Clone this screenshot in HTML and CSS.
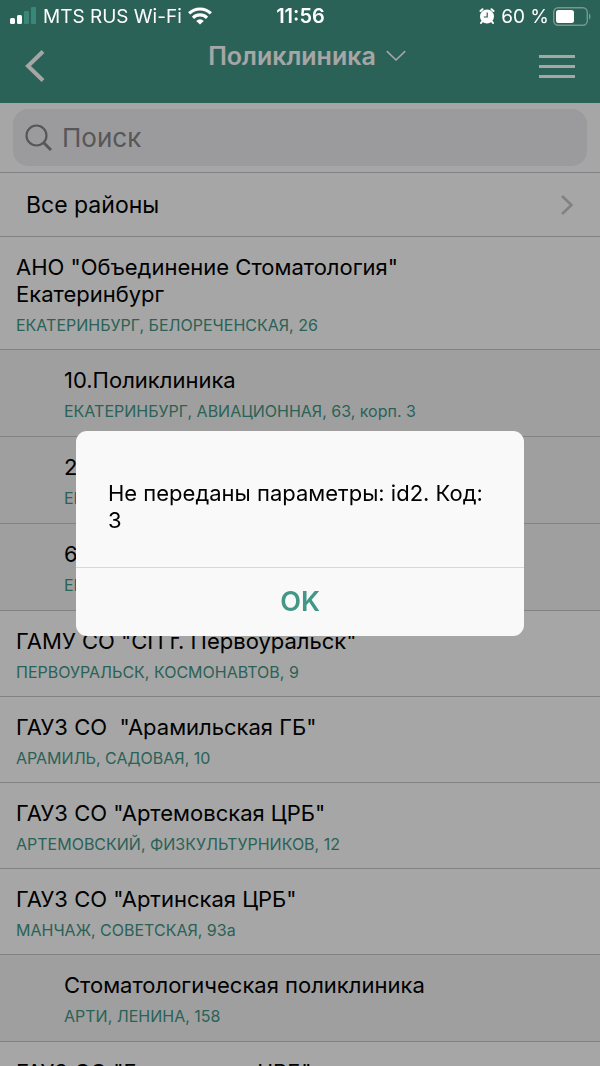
FILE: index.html
```html
<!DOCTYPE html>
<html lang="ru">
<head>
    <meta charset="utf-8">
    <meta name="viewport" content="width=device-width, initial-scale=1">
    <title>Поликлиника</title>
    <link rel="stylesheet" href="styles.css">
</head>
<body>
    <div class="status-bar">
        <div class="status-left">
            <svg class="signal" width="27" height="18" viewBox="0 0 27 18" fill="#fff">
                <rect x="0" y="11" width="5" height="6" rx="1.500"/>
                <rect x="7" y="8" width="5" height="9" rx="1.500"/>
                <rect x="14" y="4" width="5" height="13" rx="1" fill="#429786" opacity=".7"/>
                <rect x="21" y="0" width="5" height="17" rx="1" fill="#429786" opacity=".7"/>
            </svg>
            <span>MTS RUS Wi-Fi</span>
            <svg width="24" height="18" viewBox="0 0 24 18" fill="none" stroke="#fff" stroke-width="3.200">
                <path d="M1.2 6.4a15.4 15.4 0 0 1 21.6 0"/>
                <path d="M5 10.8a10 10 0 0 1 14 0"/>
                <path d="M12 17.5L8.2 13.9a5.4 5.4 0 0 1 7.6 0z" fill="#fff" stroke="none"/>
            </svg>
        </div>
        <div class="status-time">11:56</div>
        <div class="status-right">
            <svg width="16" height="16" viewBox="0 0 16 16">
                <circle cx="8" cy="8.5" r="7" fill="#fff"/>
                <path d="M1.500 3L3.500 1.200M14.500 3L12.500 1.200M3.400 13.2L2 15M12.600 13.200L14 15" stroke="#fff" stroke-width="2" stroke-linecap="round"/>
                <path d="M8.2 4.5V9H4.8" fill="none" stroke="#2a6156" stroke-width="1.2"/>
            </svg>
            <span>60 %</span>
            <svg class="battery" width="38" height="19" viewBox="0 0 38 19">
                <rect x=".7" y=".7" width="33.6" height="17.6" rx="4.5" fill="none" stroke="#fff" stroke-opacity=".35" stroke-width="1.4"/>
                <rect x="3" y="3" width="18" height="13" rx="2.5" fill="#fff"/>
                <path d="M36 6.5v6c2-1 2-5 0-6z" fill="#fff" fill-opacity=".35"/>
            </svg>
        </div>
    </div>

    <header class="navbar">
        <button type="button" class="nav-back" aria-label="Назад">
            <svg width="20" height="32" viewBox="0 0 20 32" fill="none" stroke="#fff" stroke-width="4">
                <path d="M18 1.5L3 16l15 14.5"/>
            </svg>
        </button>
        <button type="button" class="nav-title">
            <span>Поликлиника</span>
            <svg width="20" height="12" viewBox="0 0 20 12" fill="none" stroke="#fff" stroke-width="1.6">
                <path d="M.8 1.2L10 10l9.200-8.800"/>
            </svg>
        </button>
        <button type="button" class="nav-menu" aria-label="Меню">
            <span></span>
            <span></span>
            <span></span>
        </button>
    </header>

    <main class="content">
        <form class="search">
            <label class="search-box" for="search">
                <svg width="27" height="28" viewBox="0 0 27 28" fill="none" stroke="#86868b" stroke-width="2.200">
                    <circle cx="11.500" cy="11.500" r="10"/>
                    <path d="M18.500 18.500l7.500 7.500" stroke-width="3"/>
                </svg>
                <input type="search" id="search" placeholder="Поиск" aria-label="Поиск">
            </label>
        </form>

        <a class="region" href="#">
            <span>Все районы</span>
            <svg width="12" height="20" viewBox="0 0 12 20" fill="none" stroke="#c7c7cc" stroke-width="2.600">
                <path d="M1 1l9.500 9L1 19"/>
            </svg>
        </a>

        <ul class="clinics">
            <li>
                <a href="#" class="clinic">
                    <span class="name">АНО "Объединение Стоматология" Екатеринбург</span>
                    <span class="address">ЕКАТЕРИНБУРГ, БЕЛОРЕЧЕНСКАЯ, 26</span>
                </a>
            </li>
            <li>
                <a href="#" class="clinic branch">
                    <span class="name">10.Поликлиника</span>
                    <span class="address">ЕКАТЕРИНБУРГ, АВИАЦИОННАЯ, 63, корп. 3</span>
                </a>
            </li>
            <li>
                <a href="#" class="clinic branch">
                    <span class="name">2.Поликлиника</span>
                    <span class="address">ЕКАТЕРИНБУРГ</span>
                </a>
            </li>
            <li>
                <a href="#" class="clinic branch">
                    <span class="name">6.Поликлиника</span>
                    <span class="address">ЕКАТЕРИНБУРГ</span>
                </a>
            </li>
            <li>
                <a href="#" class="clinic">
                    <span class="name">ГАМУ СО "СП г. Первоуральск"</span>
                    <span class="address">ПЕРВОУРАЛЬСК, КОСМОНАВТОВ, 9</span>
                </a>
            </li>
            <li>
                <a href="#" class="clinic">
                    <span class="name">ГАУЗ СО &nbsp;"Арамильская ГБ"</span>
                    <span class="address">АРАМИЛЬ, САДОВАЯ, 10</span>
                </a>
            </li>
            <li>
                <a href="#" class="clinic">
                    <span class="name">ГАУЗ СО "Артемовская ЦРБ"</span>
                    <span class="address">АРТЕМОВСКИЙ, ФИЗКУЛЬТУРНИКОВ, 12</span>
                </a>
            </li>
            <li>
                <a href="#" class="clinic">
                    <span class="name">ГАУЗ СО "Артинская ЦРБ"</span>
                    <span class="address">МАНЧАЖ, СОВЕТСКАЯ, 93а</span>
                </a>
            </li>
            <li>
                <a href="#" class="clinic branch">
                    <span class="name">Стоматологическая поликлиника</span>
                    <span class="address">АРТИ, ЛЕНИНА, 158</span>
                </a>
            </li>
            <li>
                <a href="#" class="clinic">
                    <span class="name">ГАУЗ СО "Белоярская ЦРБ"</span>
                    <span class="address">БЕЛОЯРСКИЙ</span>
                </a>
            </li>
        </ul>
    </main>

    <div class="overlay">
        <div class="dialog" role="alertdialog" aria-modal="true" aria-describedby="dialogText">
            <p class="dialog-text" id="dialogText">Не переданы параметры: id2. Код: 3</p>
            <button type="button" class="dialog-button">OK</button>
        </div>
    </div>
</body>
</html>
```
FILE: styles.css
```css
* {
    box-sizing: border-box;
}

body {
    display: flex;
    flex-direction: column;
    height: 100vh;
    margin: 0;
    overflow: hidden;
    background-color: #429786;
    color: #000;
    font-family: Inter, "Noto Sans", sans-serif;
    font-size: 22px;
}

button {
    margin: 0;
    padding: 0;
    border: none;
    background: none;
    color: inherit;
    font-family: inherit;
    cursor: pointer;
}

a {
    color: inherit;
    text-decoration: none;
}

svg {
    display: block;
    flex-shrink: 0;
}

/* status bar stays bright above the dimmed page */
.status-bar {
    position: relative;
    z-index: 20;
    display: grid;
    grid-template-columns: 1fr auto 1fr;
    align-items: center;
    height: 32px;
    padding: 0 9px 0 10px;
    color: #fff;
    font-size: 19px;
}

.status-left,
.status-right {
    display: flex;
    align-items: center;
    gap: 6px;
}

.status-right {
    justify-content: flex-end;
}

.status-right .battery {
    margin-left: -2px;
}

.status-time {
    font-size: 20px;
    font-weight: 600;
}

.navbar {
    display: grid;
    grid-template-columns: 80px 1fr 80px;
    height: 71px;
    flex-shrink: 0;
    color: #fff;
}

.nav-back {
    padding: 0 0 4px 25px;
}

.nav-title {
    display: flex;
    align-items: center;
    justify-content: center;
    gap: 10px;
    height: 48px;
    padding-left: 14px;
    font-size: 25px;
    font-weight: 600;
}

.nav-menu {
    display: flex;
    flex-direction: column;
    justify-content: center;
    gap: 7px;
    padding: 0 25px 2px 19px;
}

.nav-menu span {
    height: 3px;
    background-color: #fff;
}

.content {
    flex: 1;
    overflow-y: auto;
    background-color: #fff;
    scrollbar-width: none;
}

.search {
    padding: 6px 13px;
    border-bottom: 1px solid #c8c7cc;
}

.search-box {
    display: flex;
    align-items: center;
    gap: 10px;
    height: 57px;
    padding: 0 12px;
    border-radius: 15px;
    background-color: #efeff1;
}

.search-box input {
    flex: 1;
    min-width: 0;
    padding: 0;
    border: none;
    outline: none;
    background: none;
    font-family: inherit;
    font-size: 26px;
}

.search-box input::placeholder {
    color: #86868b;
}

.region {
    display: flex;
    align-items: center;
    justify-content: space-between;
    height: 64px;
    padding: 0 27px 0 26px;
    border-bottom: 1px solid #c8c7cc;
    font-size: 23px;
}

.clinics {
    margin: 0;
    padding: 0;
    list-style: none;
}

.clinic {
    display: block;
    padding: 17px 160px 12px 16px;
    border-bottom: 1px solid #c8c7cc;
}

.branch {
    padding: 17px 16px 13px 64px;
    background-color: #f5f5f5;
}

.name,
.address {
    display: block;
}

.name {
    line-height: 27px;
}

.address {
    padding-top: 5px;
    color: #429786;
    font-size: 16px;
    line-height: 24px;
    white-space: nowrap;
}

.overlay {
    position: fixed;
    inset: 0;
    z-index: 10;
    display: flex;
    align-items: center;
    justify-content: center;
    padding: 0 32px;
    background-color: rgba(0, 0, 0, 0.35);
}

.dialog {
    width: 100%;
    max-width: 448px;
    border-radius: 11px;
    background-color: #f9f9f9;
    overflow: hidden;
}

.dialog-text {
    margin: 0;
    padding: 49px 32px 33px;
    line-height: 27px;
}

.dialog-button {
    width: 100%;
    height: 69px;
    border-top: 1px solid #d8d8d8;
    color: #429786;
    font-size: 27px;
    font-weight: 600;
}
```
